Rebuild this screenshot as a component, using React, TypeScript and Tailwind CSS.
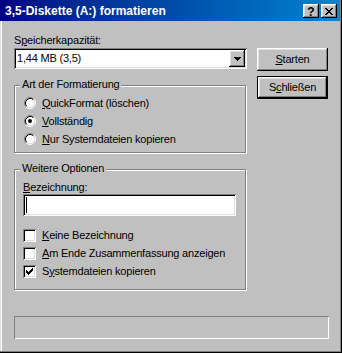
import React from 'react'

const raised = 'shadow-[inset_-1px_-1px_#000,inset_1px_1px_#fff,inset_-2px_-2px_#808080,inset_2px_2px_#dfdfdf]'
const sunken = 'shadow-[inset_1px_1px_#808080,inset_-1px_-1px_#fff,inset_2px_2px_#000,inset_-2px_-2px_#dfdfdf]'
const etched = 'border border-[#808080] shadow-[inset_1px_1px_#fff,1px_1px_#fff]'

function Radio({ checked }: { checked?: boolean }) {
  return (
    <svg width="12" height="12" viewBox="0 0 12 12" className="shrink-0">
      <circle cx="6" cy="6" r="4.5" fill="#fff" />
      <path d="M9.89 2.11A5.5 5.5 0 0 0 2.11 9.89" fill="none" stroke="#808080" />
      <path d="M2.11 9.89A5.5 5.5 0 0 0 9.89 2.11" fill="none" stroke="#fff" />
      <path d="M9.18 2.82A4.5 4.5 0 0 0 2.82 9.18" fill="none" stroke="#000" />
      <path d="M2.82 9.18A4.5 4.5 0 0 0 9.18 2.82" fill="none" stroke="#dfdfdf" />
      {checked && <circle cx="6" cy="6" r="2" fill="#000" />}
    </svg>
  )
}

function Check({ checked }: { checked?: boolean }) {
  return (
    <div className={`w-[13px] h-[13px] shrink-0 bg-white flex items-center justify-center ${sunken}`}>
      {checked && (
        <svg width="7" height="7" viewBox="0 0 7 7" shapeRendering="crispEdges">
          <path d="M6 0h1v1H6zM5 1h2v1H5zM0 2h1v1H0zM4 2h3v1H4zM0 3h2v1H0zM3 3h3v1H3zM0 4h5v1H0zM1 5h3v1H1zM2 6h1v1H2z" fill="#000" />
        </svg>
      )}
    </div>
  )
}

function Acc({ pre = '', k, post }: { pre?: string; k: string; post: string }) {
  return (
    <span className="whitespace-nowrap">
      {pre}<span className="underline underline-offset-[1px]">{k}</span>{post}
    </span>
  )
}

const RADIOS = [
  { k: 'Q', post: 'uickFormat (löschen)', checked: false },
  { k: 'V', post: 'ollständig', checked: true },
  { k: 'N', post: 'ur Systemdateien kopieren', checked: false },
]

const CHECKS = [
  { pre: '', k: 'K', post: 'eine Bezeichnung', checked: false },
  { pre: '', k: 'A', post: 'm Ende Zusammenfassung anzeigen', checked: false },
  { pre: 'S', k: 'y', post: 'stemdateien kopieren', checked: true },
]

export default function App() {
  return (
    <div className="w-[342px] h-[353px] bg-[#c0c0c0] border-r border-b border-black flex flex-col font-['Liberation_Sans',Arial,sans-serif] text-[11px] leading-[13px] tracking-[-0.2px] text-black select-none">
      <div className="flex-1 flex flex-col border-r border-b border-[#808080]">
        {/* Titelleiste */}
        <div className="h-[21px] shrink-0 flex bg-linear-to-r from-[#000080] to-[#1084d0] pr-[3px]">
          <span className="flex-1 pl-[5px] pt-[4px] text-white font-bold text-[12px] leading-[14px] tracking-normal">
            3,5-Diskette (A:) formatieren
          </span>
          <div className="flex gap-[2px] mt-[4px] self-start">
            <div className={`w-[16px] h-[14px] bg-[#c0c0c0] flex items-center justify-center ${raised}`}>
              <span className="font-bold text-[12px] leading-none tracking-normal mt-[1px]">?</span>
            </div>
            <div className={`w-[16px] h-[14px] bg-[#c0c0c0] flex items-center justify-center ${raised}`}>
              <svg width="8" height="7" viewBox="0 0 8 7" shapeRendering="crispEdges" className="ml-[-1px]">
                <path d="M0 0h2v1H0zM6 0h2v1H6zM1 1h2v1H1zM5 1h2v1H5zM2 2h4v1H2zM3 3h2v1H3zM2 4h4v1H2zM1 5h2v1H1zM5 5h2v1H5zM0 6h2v1H0zM6 6h2v1H6z" fill="#000" />
              </svg>
            </div>
          </div>
        </div>

        <div className="flex-1 flex flex-col border-l border-[#dfdfdf]">
          <div className="flex-1 flex flex-col border-l border-white">
            <div className="flex">
              {/* linke Spalte */}
              <div className="w-[245px] pl-[12px] flex flex-col">
                <div className="mt-[13px] h-[13px]"><Acc pre="S" k="p" post="eicherkapazität:" /></div>
                <div className={`mt-[1px] h-[21px] bg-white flex items-center p-[2px] ${sunken}`}>
                  <span className="flex-1 pl-[1px]">1,44 MB (3,5)</span>
                  <div className={`w-[16px] h-[17px] bg-[#c0c0c0] flex items-center justify-center ${raised}`}>
                    <svg width="7" height="4" viewBox="0 0 7 4" shapeRendering="crispEdges">
                      <path d="M0 0h7v1H0zM1 1h5v1H1zM2 2h3v1H2zM3 3h1v1H3z" fill="#000" />
                    </svg>
                  </div>
                </div>

                <div className={`relative mt-[16px] w-[232px] pt-[8px] pb-[4px] pl-[9px] ${etched}`}>
                  <span className="absolute left-[5px] -top-[8px] px-[2px] bg-[#c0c0c0]">Art der Formatierung</span>
                  {RADIOS.map((r) => (
                    <div key={r.k} className="h-[18px] flex items-center gap-[6px]">
                      <Radio checked={r.checked} />
                      <Acc k={r.k} post={r.post} />
                    </div>
                  ))}
                </div>

                <div className={`relative mt-[16px] w-[232px] pt-[11px] pb-[9px] pl-[8px] ${etched}`}>
                  <span className="absolute left-[5px] -top-[8px] px-[2px] bg-[#c0c0c0]">Weitere Optionen</span>
                  <div className="h-[13px]"><Acc k="B" post="ezeichnung:" /></div>
                  <div className={`w-[213px] h-[22px] bg-white pl-[3px] pt-[3px] ${sunken}`}>
                    <div className="w-[1px] h-[16px] bg-black" />
                  </div>
                  <div className="mt-[10px]">
                    {CHECKS.map((c) => (
                      <div key={c.k} className="h-[18px] flex items-center gap-[6px]">
                        <Check checked={c.checked} />
                        <Acc pre={c.pre} k={c.k} post={c.post} />
                      </div>
                    ))}
                  </div>
                </div>
              </div>

              {/* rechte Spalte */}
              <div className="ml-[10px] w-[71px] flex flex-col">
                <button className={`mt-[27px] h-[23px] bg-[#c0c0c0] flex items-center justify-center ${raised}`}>
                  <Acc k="S" post="tarten" />
                </button>
                <button className={`mt-[5px] h-[23px] bg-[#c0c0c0] border border-black flex items-center justify-center ${raised}`}>
                  <Acc pre="S" k="c" post="hließen" />
                </button>
              </div>
            </div>

            {/* Fortschrittsanzeige */}
            <div className="mt-[26px] ml-[12px] w-[315px] h-[23px] shadow-[inset_1px_1px_#808080,inset_-1px_-1px_#fff]" />
          </div>
        </div>
      </div>
    </div>
  )
}
